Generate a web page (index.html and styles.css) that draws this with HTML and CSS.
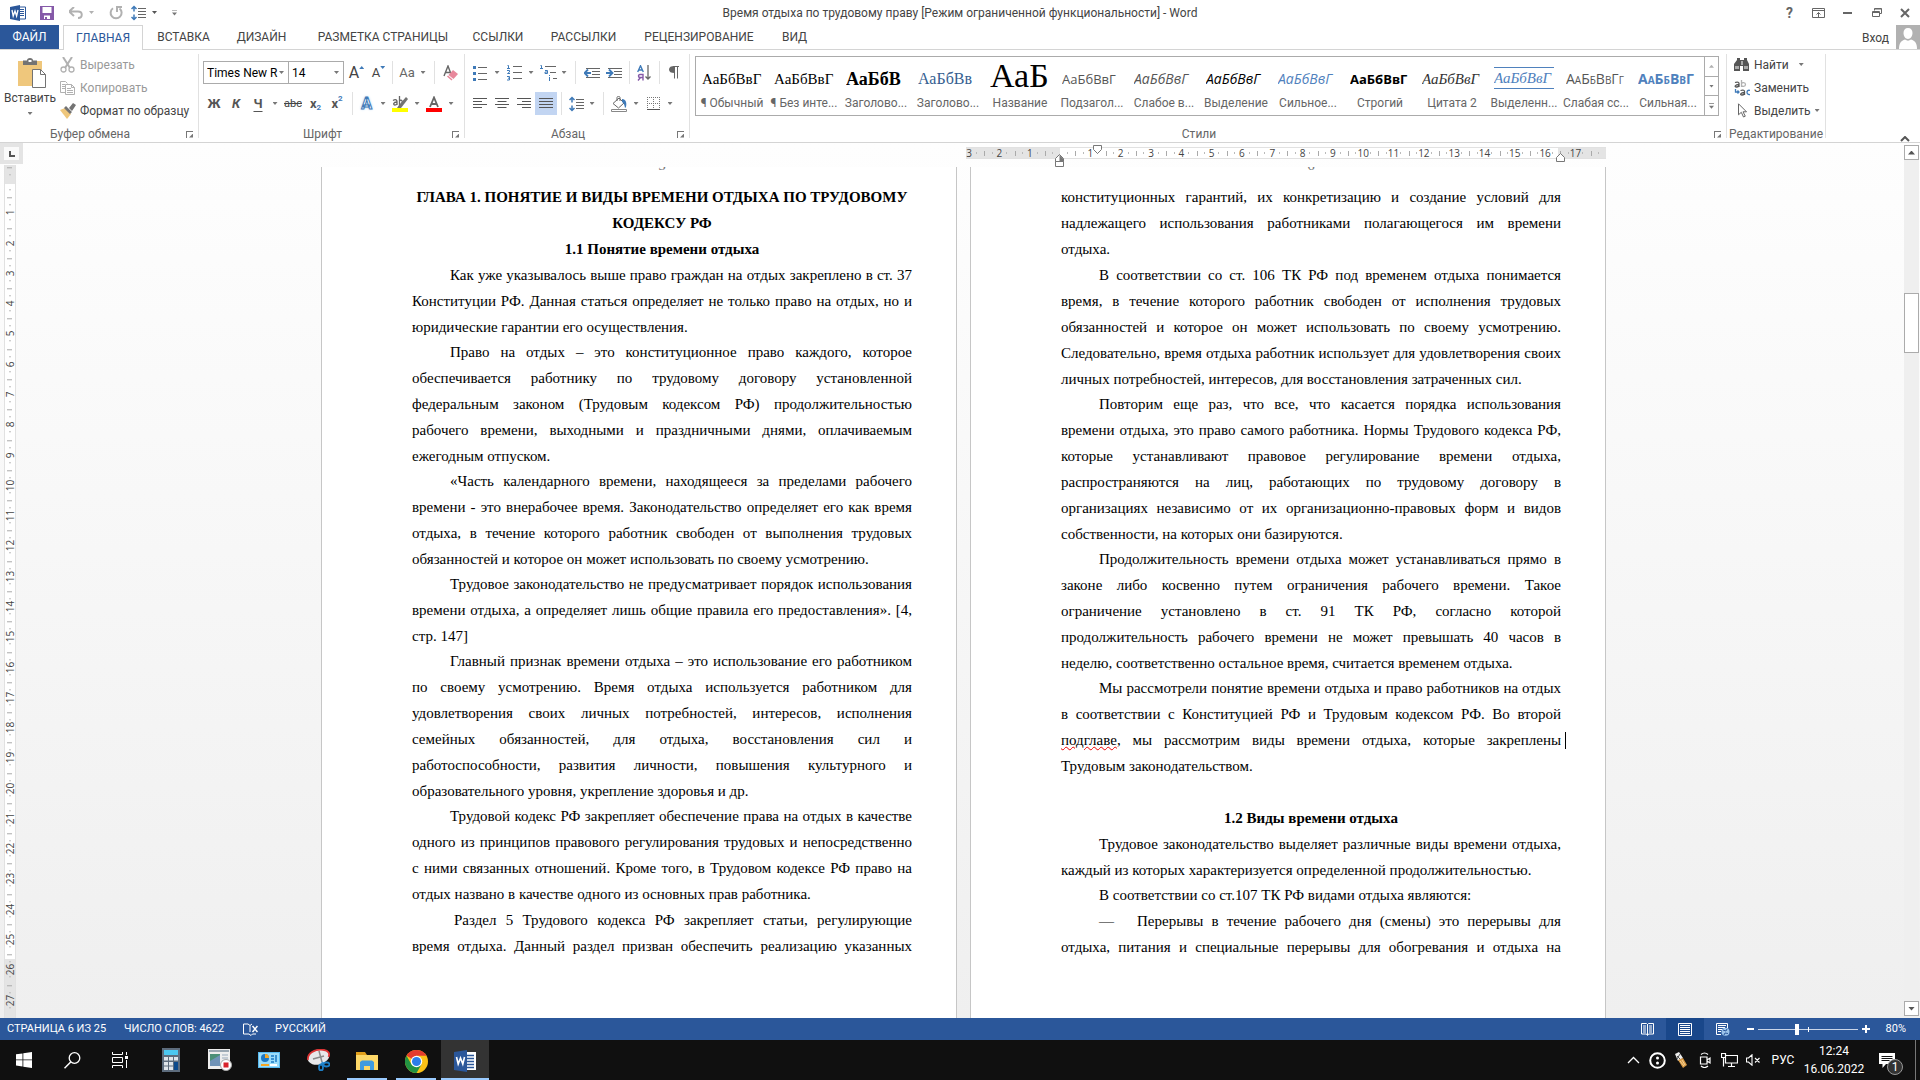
FILE: index.html
```html
<!DOCTYPE html>
<html lang="ru">
<head>
<meta charset="utf-8">
<title>Время отдыха по трудовому праву - Word</title>
<link rel="stylesheet" href="styles.css">
</head>
<body>
<header class="titlebar">
  <div class="quick">
    <svg class="q-word" width="16" height="16" viewBox="0 0 16 16"><path d="M9 2h6.500v12H9z" fill="#fff" stroke="#2b579a"/><path d="M10 4.500h4M10 6.500h4M10 8.500h4M10 10.500h4" stroke="#2b579a"/><path d="M0 2l10-2v16L0 14z" fill="#2b579a"/><path d="M2 5l1.200 6L5 6l1.600 5L8 5" fill="none" stroke="#fff" stroke-width="1.300"/></svg>
    <button aria-label="Сохранить"><svg width="14" height="14" viewBox="0 0 14 14"><path d="M0 0h14v14H0z" fill="#8559a8"/><path d="M2.500 1h9v6h-9zM4 9.500h6V13H7V11H5v2H4z" fill="#fff"/></svg></button>
    <button aria-label="Отменить"><svg width="14" height="12" viewBox="0 0 14 12"><path d="M5 0L0 4.500 5 9M1 4.500h8c5 0 5 6.500 0 6.500" fill="none" stroke="#b1b1b1" stroke-width="2"/></svg><i class="caret pale"></i></button>
    <button aria-label="Повторить"><svg width="14" height="14" viewBox="0 0 14 14"><path d="M4 2.300A5.500 5.500 0 1 0 10.500 2.500M8 6V1h5" fill="none" stroke="#b1b1b1" stroke-width="2"/></svg></button>
    <button class="spacing" aria-label="Интервал"><svg width="15" height="16" viewBox="0 0 15 16"><path d="M3 1.500v5M3 9.500v5M.5 4L3 1.500 5.500 4M.5 12L3 14.500 5.500 12" fill="none" stroke="#3f7ab8" stroke-width="1.500"/><path d="M7 3.500h8M7 6.500h8M7 9.500h8M7 12.500h8" stroke="#666"/></svg><i class="caret dark"></i></button>
    <button aria-label="Настройка панели"><i class="caret lined"></i></button>
  </div>
  <h1>Время отдыха по трудовому праву [Режим ограниченной функциональности] - Word</h1>
  <div class="winbtns">
    <button aria-label="Справка" class="help">?</button>
    <button aria-label="Параметры ленты"><svg width="13" height="10" viewBox="0 0 13 10"><path d="M.5.5h12v9H.5zM.5 2.500h12M6.500 9V4.500M4.500 6.500l2-2 2 2" fill="none" stroke="#666"/></svg></button>
    <button aria-label="Свернуть"><svg width="9" height="2"><path d="M0 1h9" stroke="#666" stroke-width="2"/></svg></button>
    <button aria-label="Восстановить"><svg width="10" height="9" viewBox="0 0 10 9"><path d="M2.500 2.500v-2h7v5h-2M.5 3.500h7v5h-7zM.5 4.500h7M2.500 1h7" fill="none" stroke="#666"/></svg></button>
    <button aria-label="Закрыть"><svg width="10" height="10" viewBox="0 0 10 10"><path d="M1 1l8 8M9 1L1 9" stroke="#666" stroke-width="2"/></svg></button>
  </div>
</header>

<nav class="tabs">
  <button class="file">ФАЙЛ</button>
  <button class="active">ГЛАВНАЯ</button>
  <button>ВСТАВКА</button>
  <button>ДИЗАЙН</button>
  <button>РАЗМЕТКА СТРАНИЦЫ</button>
  <button>ССЫЛКИ</button>
  <button>РАССЫЛКИ</button>
  <button>РЕЦЕНЗИРОВАНИЕ</button>
  <button>ВИД</button>
  <a class="login" href="#">Вход</a>
  <svg class="avatar" width="24" height="24" viewBox="0 0 24 24"><path d="M0 0h24v24H0z" fill="#b1b1b1"/><path d="M12 3c3 0 4.500 2 4.500 5S14.500 14 12 14 7.500 11 7.500 8 9 3 12 3zM3 24c0-6 2-8 6-9.500 2 1.500 4 1.500 6 0C19 16 21 18 21 24z" fill="#fff"/></svg>
</nav>

<div class="ribbon">
  <section class="group clipboard">
    <div class="body">
      <button class="paste"><svg width="28" height="30" viewBox="0 0 28 30"><path d="M0 3h24v25H0z" fill="#efc77c"/><path d="M5 2.500h4C9 1 10 0 12 0s3 1 3 2.500h4V7H5z" fill="#737373"/><path d="M10.500 2h3v2h-3z" fill="#fff"/><path d="M14.500 11.500h8l5 5v13h-13z" fill="#fff" stroke="#737373"/><path d="M22.500 11.500v5h5" fill="none" stroke="#737373"/></svg><span>Вставить</span><i class="caret"></i></button>
      <div class="stack">
        <button class="off"><svg width="16" height="16" viewBox="0 0 16 16"><path d="M3 0l7 11M12 0L5 11" stroke="#b1b1b1" stroke-width="2"/><circle cx="3.500" cy="12.500" r="2.500" fill="none" stroke="#b1b1b1" stroke-width="1.300"/><circle cx="11.500" cy="12.500" r="2.500" fill="none" stroke="#b1b1b1" stroke-width="1.300"/></svg>Вырезать</button>
        <button class="off"><svg width="16" height="16" viewBox="0 0 16 16"><path d="M5 12.500H.5V1.500h5l2 2M2 4.500h3M2 6.500h3M2 8.500h3" fill="none" stroke="#b1b1b1"/><path d="M5.500 4.500h6l3 3v7h-9zM11.500 4.500v3h3M7 8.500h4M7 10.500h6M7 12.500h6" fill="none" stroke="#b1b1b1"/></svg>Копировать</button>
        <button><svg width="16" height="16" viewBox="0 0 16 16"><path d="M0 7l5-2 6 6-4 5z" fill="#efc77c"/><path d="M6 3l6 6-2 2-6-6zM9 5l4-5 3 2-4 6z" fill="#737373"/></svg>Формат по образцу</button>
      </div>
    </div>
    <footer><span>Буфер обмена</span><button class="launch" aria-label="Буфер обмена"></button></footer>
  </section>

  <section class="group font">
    <div class="body">
      <div class="row">
        <label class="combo wide"><select aria-label="Шрифт"><option>Times New R</option></select></label>
        <label class="combo narrow"><select aria-label="Размер"><option>14</option></select></label>
        <button class="w25 big" aria-label="Увеличить">A<i class="up"></i></button>
        <button class="w19 small" aria-label="Уменьшить">A<i class="down"></i></button>
        <i class="sep w8"></i>
        <button class="w22 case" aria-label="Регистр">Aa</button><button class="w10" aria-label="Регистр, меню"><i class="caret"></i></button>
        <i class="sep w12"></i>
        <button class="w22" aria-label="Очистить"><svg width="16" height="16" viewBox="0 0 16 16"><path d="M1 11L5 1l3 8M2 7.500h5" fill="none" stroke="#666" stroke-width="1.400"/><path d="M10 5l5 4-4.500 5-5-4z" fill="#e8879b"/><path d="M5 10.500l4.500 4-1 1-4.500-4z" fill="#e8879b"/></svg></button>
      </div>
      <div class="row">
        <button class="w22 b">Ж</button><button class="w22 b i">К</button><button class="w22 b u">Ч</button><button class="w12" aria-label="Подчеркивание"><i class="caret"></i></button>
        <button class="w24 strike">abc</button><button class="w21 b sub">x<sub>2</sub></button><button class="w22 b sub">x<sup>2</sup></button>
        <i class="sep w8"></i>
        <button class="w21 fx" aria-label="Эффекты">A</button><button class="w12" aria-label="Эффекты, меню"><i class="caret"></i></button>
        <button class="w22" aria-label="Выделение цветом"><svg width="16" height="16" viewBox="0 0 16 16"><path d="M0 12h16v4H0z" fill="#ff0"/><path d="M1 4.500c3-2 4 0 4 1V9M5 6C1 6 1 9 3 9s2-1 2-1.500M7.500 0v9M7.500 5c2-2 3.500 0 2.500 3" fill="none" stroke="#666" stroke-width="1.300"/><path d="M14 1l2 2-7 9H5l2-3z" fill="#737373"/></svg></button><button class="w12" aria-label="Цвет выделения"><i class="caret"></i></button>
        <button class="w22" aria-label="Цвет текста"><svg width="16" height="16" viewBox="0 0 16 16"><path d="M0 12h16v4H0z" fill="red"/><path d="M4 11L8 1.500 12 11M5.500 8h5" fill="none" stroke="#666" stroke-width="1.800"/></svg></button><button class="w12" aria-label="Цвет"><i class="caret"></i></button>
      </div>
    </div>
    <footer><span>Шрифт</span><button class="launch" aria-label="Шрифт"></button></footer>
  </section>

  <section class="group para">
    <div class="body">
      <div class="row">
        <button class="w22" aria-label="Маркеры"><svg width="14" height="16" viewBox="0 0 14 16"><path d="M5 2.500h9M5 8.500h9M5 14.500h9" stroke="#666"/><path d="M0 1h3v3H0zM0 7h3v3H0zM0 13h3v3H0z" fill="#3f7ab8"/></svg></button><button class="w12" aria-label="Маркеры, меню"><i class="caret"></i></button>
        <button class="w22" aria-label="Нумерация"><svg width="15" height="17" viewBox="0 0 15 17"><path d="M6 2.500h9M6 8.500h9M6 14.500h9" stroke="#666"/><path d="M.5 1.500h1v3M0 4.500h3M0 6.500h2.500V8L.5 9.500H3M0 12.500h2.500v3.500H0M1 14.200h1.500" fill="none" stroke="#3f7ab8"/></svg></button><button class="w12" aria-label="Нумерация, меню"><i class="caret"></i></button>
        <button class="w22" aria-label="Многоуровневый список"><svg width="17" height="17" viewBox="0 0 17 17"><path d="M5 2.500h11M10 8.500h6M13 14.500h4" stroke="#666"/><path d="M.5 1.500h1v3M0 4.500h3M5 6.500h2.500v3H5V8h2M9.500 11v1M9.500 13v4" fill="none" stroke="#3f7ab8"/></svg></button><button class="w10" aria-label="Список, меню"><i class="caret"></i></button>
        <i class="sep w12"></i>
        <button class="w22" aria-label="Уменьшить отступ"><svg width="16" height="12" viewBox="0 0 16 12"><path d="M2 1.500h14M8 4.500h8M8 7.500h8M2 10.500h14" stroke="#666"/><path d="M7 6H1M4 2.500L.5 6 4 9.500" fill="none" stroke="#3f7ab8" stroke-width="1.800"/></svg></button>
        <button class="w22" aria-label="Увеличить отступ"><svg width="16" height="12" viewBox="0 0 16 12"><path d="M2 1.500h14M8 4.500h8M8 7.500h8M2 10.500h14" stroke="#666"/><path d="M0 6h6M3 2.500L6.500 6 3 9.500" fill="none" stroke="#3f7ab8" stroke-width="1.800"/></svg></button>
        <i class="sep w8"></i>
        <button class="w22" aria-label="Сортировка"><svg width="14" height="16" viewBox="0 0 14 16"><path d="M.7 7L3.500.8 6.300 7M1.500 5h4" fill="none" stroke="#3f7ab8" stroke-width="1.400"/><path d="M6 15.500V9.500H3c-2 0-2 3 0 3h3M3.500 12.500L1 15.500" fill="none" stroke="#8559a8" stroke-width="1.400"/><path d="M11 0v14M8.500 11.500L11 14l2.500-2.500" fill="none" stroke="#666" stroke-width="1.300"/></svg></button>
        <i class="sep w8"></i>
        <button class="w22" aria-label="Знаки абзаца"><svg width="10" height="13" viewBox="0 0 10 13"><path d="M10 .5H4M5.500.5v12M8.500.5v12" fill="none" stroke="#666"/><path d="M5.500 0v7C2 7 0 6 0 3.500S2 0 5.500 0z" fill="#666"/></svg></button>
      </div>
      <div class="row">
        <button class="w22" aria-label="По левому краю"><svg width="14" height="11" viewBox="0 0 14 11"><path d="M0 .5h14M0 3.500h9M0 6.500h14M0 9.500h9" stroke="#555"/></svg></button>
        <button class="w22" aria-label="По центру"><svg width="14" height="11" viewBox="0 0 14 11"><path d="M0 .5h14M2.500 3.500h9M0 6.500h14M2.500 9.500h9" stroke="#555"/></svg></button>
        <button class="w22" aria-label="По правому краю"><svg width="14" height="11" viewBox="0 0 14 11"><path d="M0 .5h14M5 3.500h9M0 6.500h14M5 9.500h9" stroke="#555"/></svg></button>
        <button class="w22 on" aria-label="По ширине"><svg width="14" height="11" viewBox="0 0 14 11"><path d="M0 .5h14M0 3.500h14M0 6.500h14M0 9.500h14" stroke="#555"/></svg></button>
        <i class="sep w8"></i>
        <button class="w22" aria-label="Интервал строк"><svg width="15" height="16" viewBox="0 0 15 16"><path d="M3 1.500v5M3 9.500v5M.5 4L3 1.500 5.500 4M.5 12L3 14.500 5.500 12" fill="none" stroke="#3f7ab8" stroke-width="1.500"/><path d="M7 3.500h8M7 6.500h8M7 9.500h8M7 12.500h8" stroke="#666"/></svg></button><button class="w10" aria-label="Интервал, меню"><i class="caret"></i></button>
        <i class="sep w12"></i>
        <button class="w21" aria-label="Заливка"><svg width="17" height="16" viewBox="0 0 17 16"><path d="M.5 13.500h15v2H.5z" fill="#fff" stroke="#888"/><path d="M2 7.500L8 2l5 5-5.500 5zM6 5V1.500C6 0 9 0 9 1.500V5" fill="#fff" stroke="#666"/><path d="M11 3c4 0 5 4 4 8l-1 1c-.5-3-1-5-3-6z" fill="#3f7ab8"/></svg></button><button class="w12" aria-label="Заливка, меню"><i class="caret"></i></button>
        <button class="w22" aria-label="Границы"><svg width="13" height="13" viewBox="0 0 13 13"><path d="M.5 0v12M12.500 0v12M6.500 0v12M0 .5h13M0 6.500h13" stroke="#777" stroke-dasharray="1 1"/><path d="M0 12.500h13" stroke="#555"/></svg></button><button class="w12" aria-label="Границы, меню"><i class="caret"></i></button>
      </div>
    </div>
    <footer><span>Абзац</span><button class="launch" aria-label="Абзац"></button></footer>
  </section>

  <section class="group styles">
    <div class="gallery">
      <button><b class="p-serif">АаБбВвГ</b><span>¶ Обычный</span></button>
      <button><b class="p-serif">АаБбВвГ</b><span>¶ Без инте...</span></button>
      <button><b class="p-h1">АаБбВ</b><span>Заголово...</span></button>
      <button><b class="p-h2">АаБбВв</b><span>Заголово...</span></button>
      <button><b class="p-title">АаБ</b><span>Название</span></button>
      <button><b class="p-subt">АаБбВвГ</b><span>Подзагол...</span></button>
      <button><b class="p-weak">АаБбВвГ</b><span>Слабое в...</span></button>
      <button><b class="p-emph">АаБбВвГ</b><span>Выделение</span></button>
      <button><b class="p-blue">АаБбВвГ</b><span>Сильное...</span></button>
      <button><b class="p-strong">АаБбВвГ</b><span>Строгий</span></button>
      <button><b class="p-quote">АаБбВвГ</b><span>Цитата 2</span></button>
      <button><b class="p-iquote">АаБбВвГ</b><span>Выделенн...</span></button>
      <button><b class="p-ref">АаБбВвГг</b><span>Слабая сс...</span></button>
      <button><b class="p-iref">АаБбВвГ</b><span>Сильная...</span></button>
      <div class="gscroll">
        <button aria-label="Вверх"><i class="caret flip pale"></i></button>
        <button aria-label="Вниз"><i class="caret"></i></button>
        <button aria-label="Дополнительно"><i class="caret lined"></i></button>
      </div>
    </div>
    <footer><span>Стили</span><button class="launch" aria-label="Стили"></button></footer>
  </section>

  <section class="group editing">
    <div class="stack">
      <button><svg width="16" height="14" viewBox="0 0 16 14"><path d="M3 0h3v2h4V0h3v2l2 4v7H9V8H6v5H0V6l3-4z" fill="#555"/><path d="M2 8v3M4 8v3M11 8v3M13 8v3M8 3v4" stroke="#fff"/></svg>Найти<i class="caret far"></i></button>
      <button><svg width="16" height="16" viewBox="0 0 16 16"><path d="M1 2.500c3-1 4 0 4 1V7M5 4.500C1 4.500 0 7 2.500 7 4 7 5 6 5 5" fill="none" stroke="#555" stroke-width="1.300"/><path d="M7.500 0v7M7.500 4c0-2 4-2 4 .5S7.500 7 7.500 5" fill="none" stroke="#b1b1b1" stroke-width="1.300"/><path d="M1.500 9v3H5M3.500 10.500L5 12l-1.500 1.500M16 10.500c-4-1.500-4 5 0 4" fill="none" stroke="#3f7ab8" stroke-width="1.300"/><path d="M6.500 10.500c3-1 4 0 4 1V15M10.500 12.500c-4 0-5 2.500-2.500 2.500 1.500 0 2.500-1 2.500-2" fill="none" stroke="#555" stroke-width="1.300"/></svg>Заменить</button>
      <button><svg width="16" height="15" viewBox="0 0 16 15"><path d="M4.500.8v11l2.800-2.500L9.500 14l1.800-.8L9 8.800h3.500z" fill="#fff" stroke="#666"/></svg>Выделить<i class="caret near"></i></button>
    </div>
    <footer><span>Редактирование</span></footer>
  </section>
  <div class="tail"><button aria-label="Свернуть ленту"><svg width="10" height="6" viewBox="0 0 10 6"><path d="M1 5l4-4 4 4" fill="none" stroke="#555" stroke-width="2"/></svg></button></div>
</div>

<main class="workspace">
  <div class="side">
    <button class="corner" aria-label="Табуляция"><svg width="6" height="6"><path d="M1 0v5h5" fill="none" stroke="#555" stroke-width="2"/></svg></button>
    <div class="vruler"><i></i><i>1</i><i>2</i><i>3</i><i>4</i><i>5</i><i>6</i><i>7</i><i>8</i><i>9</i><i>10</i><i>11</i><i>12</i><i>13</i><i>14</i><i>15</i><i>16</i><i>17</i><i>18</i><i>19</i><i>20</i><i>21</i><i>22</i><i>23</i><i>24</i><i>25</i><i>26</i><i>27</i></div>
  </div>
  <div class="canvas">
    <div class="hrow">
      <div class="hruler">
        <div class="clip"><div class="cells"><i>3</i><i>2</i><i>1</i><i></i><i>1</i><i>2</i><i>3</i><i>4</i><i>5</i><i>6</i><i>7</i><i>8</i><i>9</i><i>10</i><i>11</i><i>12</i><i>13</i><i>14</i><i>15</i><i>16</i><i>17</i><i></i></div></div>
        <svg class="mark m-left" width="11" height="15" viewBox="0 0 11 15"><path d="M1.500 8.500v-3l4-4 4 4v3zM1.500 8.500h8v5h-8z" fill="#fff" stroke="#777"/><path d="M5.500 2v6h4V6z" fill="#777"/></svg>
        <svg class="mark m-first" width="9" height="9" viewBox="0 0 9 9"><path d="M.5.500h8v4l-4 4-4-4z" fill="#fff" stroke="#777"/></svg>
        <svg class="mark m-right" width="9" height="9" viewBox="0 0 9 9"><path d="M.5 8.500h8v-4l-4-4-4 4z" fill="#fff" stroke="#777"/></svg>
      </div>
    </div>
    <div class="pages">
      <article class="page">
        <div class="pnum">5</div>
        <h2>ГЛАВА 1. ПОНЯТИЕ И ВИДЫ ВРЕМЕНИ ОТДЫХА ПО ТРУДОВОМУ КОДЕКСУ РФ</h2>
        <h2>1.1 Понятие времени отдыха</h2>
        <p>Как уже указывалось выше право граждан на отдых закреплено в ст. 37 Конституции РФ. Данная статься определяет не только право на отдых, но и юридические гарантии его осуществления.</p>
        <p>Право на отдых – это конституционное право каждого, которое обеспечивается работнику по трудовому договору установленной федеральным законом (Трудовым кодексом РФ) продолжительностью рабочего времени, выходными и праздничными днями, оплачиваемым ежегодным отпуском.</p>
        <p>«Часть календарного времени, находящееся за пределами рабочего времени - это внерабочее время. Законодательство определяет его как время отдыха, в течение которого работник свободен от выполнения трудовых обязанностей и которое он может использовать по своему усмотрению.</p>
        <p>Трудовое законодательство не предусматривает порядок использования времени отдыха, а определяет лишь общие правила его предоставления». [4, стр. 147]</p>
        <p>Главный признак времени отдыха – это использование его работником по своему усмотрению. Время отдыха используется работником для удовлетворения своих личных потребностей, интересов, исполнения семейных обязанностей, для отдыха, восстановления сил и работоспособности, развития личности, повышения культурного и образовательного уровня, укрепление здоровья и др.</p>
        <p>Трудовой кодекс РФ закрепляет обеспечение права на отдых в качестве одного из принципов правового регулирования трудовых и непосредственно с ними связанных отношений. Кроме того, в Трудовом кодексе РФ право на отдых названо в качестве одного из основных прав работника.</p>
        <p class="runs-on deeper">Раздел 5 Трудового кодекса РФ закрепляет статьи, регулирующие время отдыха. Данный раздел призван обеспечить реализацию указанных</p>
      </article>
      <article class="page">
        <div class="pnum">6</div>
        <p class="carried">конституционных гарантий, их конкретизацию и создание условий для надлежащего использования работниками полагающегося им времени отдыха.</p>
        <p>В соответствии со ст. 106 ТК РФ под временем отдыха понимается время, в течение которого работник свободен от исполнения трудовых обязанностей и которое он может использовать по своему усмотрению. Следовательно, время отдыха работник использует для удовлетворения своих личных потребностей, интересов, для восстановления затраченных сил.</p>
        <p>Повторим еще раз, что все, что касается порядка использования времени отдыха, это право самого работника. Нормы Трудового кодекса РФ, которые устанавливают правовое регулирование времени отдыха, распространяются на лиц, работающих по трудовому договору в организациях независимо от их организационно-правовых форм и видов собственности, на которых они базируются.</p>
        <p>Продолжительность времени отдыха может устанавливаться прямо в законе либо косвенно путем ограничения рабочего времени. Такое ограничение установлено в ст. 91 ТК РФ, согласно которой продолжительность рабочего времени не может превышать 40 часов в неделю, соответственно остальное время, считается временем отдыха.</p>
        <p>Мы рассмотрели понятие времени отдыха и право работников на отдых в соответствии с Конституцией РФ и Трудовым кодексом РФ. Во второй <span class="typo">подглаве</span>, мы рассмотрим виды времени отдыха, которые закреплены<span class="cursor"></span> Трудовым законодательством.</p>
        <p class="blank">&nbsp;</p>
        <h2>1.2 Виды времени отдыха</h2>
        <p>Трудовое законодательство выделяет различные виды времени отдыха, каждый из которых характеризуется определенной продолжительностью.</p>
        <p>В соответствии со ст.107 ТК РФ видами отдыха являются:</p>
        <p class="runs-on"><span class="dash">—</span>Перерывы в течение рабочего дня (смены) это перерывы для отдыха, питания и специальные перерывы для обогревания и отдыха на</p>
      </article>
    </div>
  </div>
  <div class="vscroll">
    <button aria-label="Вверх"><i class="caret flip dark"></i></button>
    <div class="track"><div class="thumb"></div></div>
    <button aria-label="Вниз"><i class="caret dark"></i></button>
  </div>
</main>

<footer class="status">
  <span class="s1">СТРАНИЦА 6 ИЗ 25</span>
  <span class="s2">ЧИСЛО СЛОВ: 4622</span>
  <svg class="s3" width="15" height="13" viewBox="0 0 15 13"><path d="M8 12.500L6 11H.5V1H5l2 1.500 2-1.500M7 2.500V9M13 11H9.500L8 12.500" fill="none" stroke="#fff"/><path d="M9.500 3l5 6M14.500 3l-5 6" stroke="#fff" stroke-width="1.500"/></svg>
  <span>РУССКИЙ</span>
  <div class="views">
    <button aria-label="Режим чтения"><svg width="13" height="13" viewBox="0 0 13 13"><path d="M.5.500h5l1 1 1-1h5v10.500h-5l-1 1.500-1-1.500h-5zM6.500 1v11" fill="none" stroke="#fff"/><path d="M2 3h3M2 5h3M2 7h3M2 9h3M8 3h3M8 5h3M8 7h3M8 9h3" stroke="#fff"/></svg></button>
    <button class="cur" aria-label="Разметка страницы"><svg width="14" height="13" viewBox="0 0 14 13"><path d="M.5.500h13v12H.5z" fill="none" stroke="#fff"/><path d="M2 2.500h10M2 4.500h10M2 6.500h10M2 8.500h10M2 10.500h10" stroke="#fff"/></svg></button>
    <button aria-label="Веб-документ"><svg width="14" height="13" viewBox="0 0 14 13"><path d="M5 11.500H.5V.500h11V5M2 2.500h8M2 4.500h7M2 6.500h4M2 8.500h3" fill="none" stroke="#fff"/><circle cx="9.500" cy="8.800" r="4" fill="#9cc3ea"/><path d="M7 7l3 1 1-2M8 12l1-2 3 .5" stroke="#2b579a" fill="none"/></svg></button>
  </div>
  <button class="zb" aria-label="Уменьшить"><svg width="7" height="8"><path d="M0 4h7" stroke="#fff" stroke-width="2"/></svg></button>
  <input type="range" min="0" max="100" value="39" aria-label="Масштаб">
  <button class="zb" aria-label="Увеличить"><svg width="8" height="8"><path d="M0 4h8M4 0v8" stroke="#fff" stroke-width="2"/></svg></button>
  <span class="pct">80%</span>
</footer>

<div class="taskbar">
  <div class="sys">
    <button aria-label="Пуск"><svg width="16" height="16" viewBox="0 0 16 16"><path d="M0 2.300L6.500 1.400v6.100H0zM7.300 1.300L16 0v7.500H7.300zM0 8.300h6.500v6.200L0 13.600zM7.300 8.300H16V16l-8.700-1.300z" fill="#fff"/></svg></button>
    <button aria-label="Поиск"><svg width="17" height="17" viewBox="0 0 17 17"><circle cx="10.500" cy="6" r="5.300" fill="none" stroke="#fff" stroke-width="1.300"/><path d="M6.700 10L.5 16.300" stroke="#fff" stroke-width="1.500"/></svg></button>
    <button aria-label="Представление задач"><svg width="16" height="16" viewBox="0 0 16 16"><path d="M.5 0v2.500h10V0M.5 16v-2.500h10V16M.5 5.500h10v5H.5zM14.500 0v3M14.500 8v8" fill="none" stroke="#fff"/><path d="M13 4h3v3h-3z" fill="#fff"/></svg></button>
  </div>
  <div class="apps">
    <button aria-label="Калькулятор"><svg width="18" height="24" viewBox="0 0 18 24"><path d="M0 0h18v24H0z" fill="#5d6c7c"/><path d="M2 2h14v5H2z" fill="#4cc8f0"/><path d="M2 9h4v3.500H2zM7 9h4v3.500H7zM12 9h4v3.500h-4zM2 14h4v3.500H2zM7 14h4v3.500H7zM2 18.500h4V22H2zM7 18.500h4V22H7z" fill="#dfe5ea"/><path d="M12 14h4v8h-4z" fill="#0c4a8c"/></svg></button>
    <button aria-label="Запись экрана"><svg width="24" height="22" viewBox="0 0 24 22"><path d="M0 0h22v20H0z" fill="#eee"/><path d="M1 1h20v2H1z" fill="#9aa7b2"/><path d="M2 5h10v12H2z" fill="#4b8f78"/><path d="M2 12l10-6v11H2z" fill="#6f93b8"/><path d="M14 6h6M14 9h6M14 12h6" stroke="#9ab"/><circle cx="18" cy="16" r="5.500" fill="#fff" stroke="#aaa"/><path d="M15.500 13.500h5v5h-5z" fill="#d8232a"/></svg></button>
    <button aria-label="Панель управления"><svg width="22" height="16" viewBox="0 0 22 16"><path d="M0 0h22v16H0z" fill="#57b9ef"/><path d="M1 1h20v14H1z" fill="#9bdcf9"/><circle cx="7" cy="6" r="4" fill="#1b78c4"/><path d="M7 6V2a4 4 0 0 1 4 4z" fill="#f5a623"/><path d="M13 4h3M13 7h3M13 10h3M18 3v7" stroke="#1b78c4" stroke-width="1.500"/><path d="M3 13h8" stroke="#f5a623" stroke-width="2"/><path d="M12 13h7" stroke="#fff" stroke-width="2"/></svg></button>
    <button aria-label="Ножницы"><svg width="23" height="22" viewBox="0 0 23 22"><ellipse cx="11.500" cy="8" rx="11" ry="7.500" transform="rotate(-15 11.500 8)" fill="#e8e8ea"/><path d="M1 11C0 4 8 0 16 .8c6 .7 7 4 5.500 7" fill="none" stroke="#d33" stroke-width="1.800"/><path d="M6 10l11-3M12 2l3 11" stroke="#8a8a8a" stroke-width="1.500"/><path d="M16 13l-2 3" stroke="#2c8fd6" stroke-width="2"/><ellipse cx="14" cy="18.500" rx="2" ry="3" fill="none" stroke="#1d7fc6" stroke-width="1.800"/><ellipse cx="19.500" cy="15.500" rx="3" ry="2" fill="none" stroke="#1d7fc6" stroke-width="1.800"/></svg></button>
    <button class="run" aria-label="Проводник"><svg width="22" height="18" viewBox="0 0 22 18"><path d="M0 0h9l2 3H0z" fill="#e2a01c"/><path d="M0 3h22v15H0z" fill="#fdd868"/><path d="M4 18v-8l2-1.500h10l2 1.500v8h-4v-4H8v4z" fill="#3f9be0"/></svg></button>
    <button class="run" aria-label="Chrome"><svg width="23" height="23" viewBox="0 0 24 24"><circle cx="12" cy="12" r="12" fill="#fbc116"/><path d="M12 12L1.600 6A12 12 0 0 1 22.400 6z" fill="#e33b2e"/><path d="M1.600 6A12 12 0 0 0 12 24l5.200-9L12 12 6.800 15z" fill="#229342"/><path d="M12 6h10.400L17 15z" fill="#fbc116"/><circle cx="12" cy="12" r="6" fill="#fff"/><circle cx="12" cy="12" r="4.700" fill="#2b7de9"/></svg></button>
    <button class="run front" aria-label="Word"><svg width="22" height="22" viewBox="0 0 22 22"><path d="M12 2h10v18H12z" fill="#fff"/><path d="M13 5.500h7M13 8.500h7M13 11.500h7M13 14.500h7M13 17.500h7" stroke="#2b579a" stroke-width="1.500"/><path d="M0 2l13-2v22L0 20z" fill="#2b579a"/><path d="M2.500 7l1.700 7L6.500 8l2.300 6 1.700-7" fill="none" stroke="#fff" stroke-width="1.600"/></svg></button>
  </div>
  <div class="tray">
    <button aria-label="Скрытые значки"><svg width="13" height="8" viewBox="0 0 13 8"><path d="M1 7l5.500-5.500L12 7" fill="none" stroke="#fff" stroke-width="1.300"/></svg></button>
    <button aria-label="Приложение"><svg width="17" height="17" viewBox="0 0 17 17"><circle cx="8.500" cy="8.500" r="7.300" fill="none" stroke="#fff" stroke-width="2"/><circle cx="8.500" cy="6" r="1.500" fill="#fff"/><circle cx="8.500" cy="11" r="1.500" fill="#fff"/></svg></button>
    <button aria-label="Очистка"><svg width="14" height="16" viewBox="0 0 14 16"><path d="M1 2l4-2 4 6-5 3z" fill="#eee"/><path d="M3 4l3 3M6 2L3 7" stroke="#555"/><path d="M4 8l5-2 4 7-4 3z" fill="#d99a45"/><path d="M6 9l4 5M8 8l3 5" stroke="#f4d49a"/></svg></button>
    <button aria-label="Камера"><svg width="12" height="16" viewBox="0 0 12 16"><path d="M1.500 5h6.500v7H1.500zM8 8l3-2v5L8 9M2 2.500Q5.500-.5 9 2.500M2 14Q5.500 17 9 14" fill="none" stroke="#fff" stroke-width="1.200"/></svg></button>
    <button aria-label="Сеть"><svg width="17" height="14" viewBox="0 0 17 14"><path d="M5 2.500h11.500v7.500H4.500V5M10.500 10v3M7 13.500h7M.5.500h4v4h-4zM2.500 5v8.500" fill="none" stroke="#fff" stroke-width="1.200"/></svg></button>
    <button aria-label="Звук"><svg width="14" height="12" viewBox="0 0 14 12"><path d="M.5 4h2L6 .8v10.400L2.500 8h-2zM9 4l4.500 4.500M13.500 4L9 8.500" fill="none" stroke="#fff" stroke-width="1.100"/></svg></button>
    <button class="lang">РУС</button>
    <button class="clock">12:24<br>16.06.2022</button>
    <button class="note" aria-label="Уведомления"><svg width="16" height="15" viewBox="0 0 16 15"><path d="M0 0h16v11H7l-3.500 4v-4H0z" fill="#fff"/><path d="M2.500 3.500h11M2.500 5.500h11M2.500 7.500h8" stroke="#111"/></svg><span class="badge">1</span></button>
    <i class="edge"></i>
  </div>
</div>
</body>
</html>
```
FILE: styles.css
```css
* { box-sizing: border-box; }
body {
  margin: 0;
  height: 100vh;
  display: flex;
  flex-direction: column;
  overflow: hidden;
  background: #fff;
  color: #444;
  font: 12px/16px Roboto, "Open Sans", sans-serif;
}
button {
  border: 0;
  padding: 0;
  background: none;
  color: inherit;
  font: inherit;
  display: flex;
  align-items: center;
  justify-content: center;
  white-space: nowrap;
}
svg { display: block; flex: none; }
h1, h2, p { margin: 0; font-weight: normal; }

.caret { flex: none; width: 5px; height: 3px; background: #777; clip-path: polygon(0 0, 100% 0, 50% 100%); }
.caret.flip { clip-path: polygon(50% 0, 100% 100%, 0 100%); }
.caret.pale { background: #b1b1b1; }
.caret.dark { background: #555; }
.caret.lined { height: 6px; clip-path: polygon(0 0, 100% 0, 100% 1px, 0 1px, 0 3px, 100% 3px, 50% 100%, 0 3px); }
.vscroll .caret { width: 7px; height: 4px; }

/* Title bar */
.titlebar { height: 25px; display: grid; grid-template-columns: 1fr auto 1fr; align-items: center; flex: none; }
.titlebar h1 { font-size: 12px; line-height: 16px; }
.quick { display: flex; align-items: center; padding-left: 10px; }
.quick button { gap: 6px; }
.q-word { margin-right: 14px; }
.quick button + button { margin-left: 15px; }
.quick .spacing { margin-left: 8px; }
.winbtns { display: flex; justify-content: flex-end; padding-right: 5px; }
.winbtns button { width: 29px; height: 20px; }
.winbtns button:last-child { width: 24px; justify-content: flex-end; padding-right: 5px; }
.winbtns .help { font-size: 14px; font-weight: bold; color: #666; }

/* Tabs */
.tabs {
  height: 25px;
  flex: none;
  display: grid;
  grid-template-columns: 59px 88px 73px 83px 160px 70px 101px 130px 61px 1fr 24px;
  border-bottom: 1px solid #d4d4d4;
}
.tabs button { height: 24px; }
.tabs .file { background: #2b579a; color: #fff; }
.tabs .active { height: 25px; margin: 0 4px; border: 1px solid #d4d4d4; border-bottom: 0; background: #fff; color: #2b579a; }
.login { justify-self: end; align-self: center; padding-right: 7px; color: #444; text-decoration: none; }

/* Ribbon */
.ribbon { height: 93px; flex: none; display: flex; padding-top: 4px; border-bottom: 1px solid #d4d4d4; }
.group { flex: none; display: flex; flex-direction: column; justify-content: space-between; border-right: 1px solid #e1e1e1; margin-bottom: 4px; }
.group > footer { height: 8px; display: flex; align-items: center; color: #666; }
.group > footer span { flex: 1; text-align: center; padding-right: 6px; }
.launch { width: 7px; height: 7px; margin-right: 5px; border: 1px solid #777; border-width: 1px 0 0 1px; }
.launch::after { content: ""; width: 4px; height: 4px; margin: 2px 0 0 2px; background: #777; clip-path: polygon(100% 0, 100% 100%, 0 100%); }
.clipboard { width: 199px; }
.font { width: 266px; }
.para { width: 225px; }
.styles { flex: 1; min-width: 0; }
.editing { width: 99px; }
.editing > footer span { padding: 0; }
.tail { width: 94px; display: flex; align-items: flex-end; justify-content: flex-end; padding: 0 10px 0 0; }
.clipboard .body { display: flex; }
.paste { width: 60px; flex-direction: column; justify-content: flex-start; padding: 4px 0 0 0; line-height: 20px; }
.paste svg { margin-left: 4px; }
.paste .caret { margin-top: 4px; }
.stack { display: flex; flex-direction: column; }
.stack button { height: 23px; gap: 4px; justify-content: flex-start; padding-bottom: 2px; }
.off { color: #999; }
.editing .stack { padding-left: 7px; }
.caret.far { margin-left: 6px; }
.caret.near { margin-left: 0; }
.font .body, .para .body { padding: 7px 0 0 4px; display: flex; flex-direction: column; gap: 8px; }
.row { display: flex; height: 23px; align-items: stretch; }
.w8 { width: 8px; } .w10 { width: 10px; } .w12 { width: 12px; } .w19 { width: 19px; }
.w21 { width: 21px; } .w22 { width: 22px; } .w24 { width: 24px; } .w25 { width: 25px; }
.sep { display: flex; justify-content: center; }
.sep::before { content: ""; width: 1px; background: #e1e1e1; }
.combo { position: relative; height: 23px; }
.combo.wide { width: 86px; margin-right: -1px; }
.combo.narrow { width: 56px; }
.combo select { appearance: none; width: 100%; height: 100%; padding: 0 10px 0 3px; border: 1px solid #ababab; border-radius: 0; background: #fff; color: #000; font: inherit; }
.combo::after { content: ""; position: absolute; right: 5px; top: 10px; width: 5px; height: 3px; background: #777; clip-path: polygon(0 0, 100% 0, 50% 100%); }
.big { font-size: 16px; align-items: center; }
.small { font-size: 13px; }
.big i, .small i { align-self: flex-start; margin-top: 5px; width: 5px; height: 3px; background: #3f7ab8; clip-path: polygon(50% 0, 100% 100%, 0 100%); }
.small i { clip-path: polygon(0 0, 100% 0, 50% 100%); }
.case { font-size: 13px; color: #666; }
.b { font-weight: bold; font-size: 13px; color: #555; }
.i { font-style: italic; }
.u { text-decoration: underline; text-underline-offset: 3px; }
.strike { text-decoration: line-through; font-size: 11px; }
.sub sub, .sub sup { font-size: 8px; line-height: 8px; color: #3f7ab8; }
.sub sub { align-self: flex-end; padding-bottom: 3px; }
.sub sup { align-self: flex-start; padding-top: 3px; }
.fx { font-size: 16px; font-weight: bold; color: #fff; -webkit-text-stroke: 1px #3f7ab8; text-shadow: 0 0 3px #8ab8e8; }
.on { background: #c2d5f2; }

.gallery { margin: 2px 7px 0 5px; height: 60px; border: 1px solid #ababab; display: flex; }
.gallery > button { flex: none; width: 72px; flex-direction: column; justify-content: flex-start; padding: 8px 0 0 0; }
.gallery b { width: 60px; height: 28px; overflow: hidden; text-align: left; font: 14px/28px "Open Sans", sans-serif; color: #000; }
.gallery span { line-height: 20px; color: #666; }
.gallery .p-serif { font-family: "Liberation Serif", serif; font-size: 15px; }
.gallery .p-h1 { font-family: "Liberation Serif", serif; font-weight: bold; font-size: 18px; }
.gallery .p-h2 { font-family: "Liberation Serif", serif; color: #365f91; font-size: 16px; }
.gallery .p-title { font-family: "Liberation Serif", serif; font-size: 34px; line-height: 22px; }
.gallery .p-subt, .gallery .p-weak { color: #555; }
.gallery .p-subt { font-size: 13px; }
.gallery .p-weak, .gallery .p-emph, .gallery .p-blue, .gallery .p-quote, .gallery .p-iquote { font-style: italic; }
.gallery .p-blue { color: #4f81bd; }
.gallery .p-strong { font-weight: bold; font-size: 13px; }
.gallery .p-quote { font-family: "Liberation Serif", serif; font-size: 15px; color: #333; }
.gallery .p-iquote { font-family: "Liberation Serif", serif; font-size: 15px; color: #4f81bd; height: 22px; line-height: 20px; margin: 2px 0 4px; border: 1px solid #4f81bd; border-width: 1px 0; }
.gallery .p-ref { font-variant: small-caps; color: #555; }
.gallery .p-iref { font-variant: small-caps; font-weight: bold; color: #4f81bd; }
.gscroll { width: 15px; margin-left: auto; border-left: 1px solid #ababab; display: flex; flex-direction: column; }
.gscroll button { flex: 1; }
.gscroll button + button { border-top: 1px solid #ababab; }

/* Document */
.workspace { flex: 1; min-height: 0; display: flex; background: linear-gradient(#fefefe, #efefef); }
.side { width: 24px; display: flex; flex-direction: column; }
.corner { width: 23px; height: 21px; margin-bottom: 1px; border: 4px solid #e4e4e4; background: #fafafa; }
.vruler {
  flex: 1;
  width: 12px;
  margin-left: 4px;
  padding: 2px 0 3px;
  display: flex;
  flex-direction: column;
  border: 1px solid #e1e1e1;
  border-width: 0 1px;
  background: linear-gradient(#e4e4e4 19px, #fff 19px, #fff 794px, #e4e4e4 794px);
}
.vruler i, .cells i { flex: 1; display: flex; align-items: center; justify-content: center; font: 10px/12px "Open Sans", sans-serif; color: #444; }
.vruler i {
  writing-mode: vertical-rl;
  transform: rotate(180deg);
  background:
    linear-gradient(#aaa, #aaa) 50% 100% / 5px 1px no-repeat,
    linear-gradient(#bbb, #bbb) 50% 25% / 2px 1px no-repeat,
    linear-gradient(#bbb, #bbb) 50% 75% / 2px 1px no-repeat;
}
.canvas { flex: 1; display: flex; flex-direction: column; padding-right: 1px; min-width: 0; }
.hrow { height: 24px; width: 1285px; align-self: center; display: flex; justify-content: flex-end; flex: none; padding-top: 4px; }
.hruler { position: relative; width: 640px; height: 12px; }
.clip { overflow: hidden; height: 12px; border: 1px solid #e1e1e1; border-width: 1px 0; background: linear-gradient(90deg, #e4e4e4 94px, #fff 94px, #fff 592px, #e4e4e4 592px); }
.cells { display: flex; width: 667px; height: 10px; margin-left: -12px; }
.cells i {
  background:
    linear-gradient(#aaa, #aaa) 0 50% / 1px 5px no-repeat,
    linear-gradient(#bbb, #bbb) 25% 50% / 1px 2px no-repeat,
    linear-gradient(#bbb, #bbb) 75% 50% / 1px 2px no-repeat;
}
.mark { position: absolute; }
.m-left { left: 88px; top: 6px; }
.m-first { left: 127px; top: -2px; }
.m-right { left: 590px; top: 6px; }
.pages { flex: 1; min-height: 0; overflow: hidden; display: flex; justify-content: center; gap: 13px; }
.page {
  width: 636px;
  padding: 0 44px 0 90px;
  background: #fff;
  border: 1px solid #c6c6c6;
  border-width: 0 1px;
  color: #000;
  font: 15px/26px "Liberation Serif", "Times New Roman", serif;
}
.pnum { margin: -10px 0 11px; line-height: 16px; text-align: center; color: #777; }
.page h2 { font-size: 15px; line-height: 26px; font-weight: bold; text-align: center; }
.page p { text-align: justify; text-indent: 38px; }
.page p + p:not(.blank, .runs-on, .carried + p) { margin-top: -1px; }
.page .carried { text-indent: 0; }
.page .runs-on { text-align-last: justify; }
.page .deeper { text-indent: 42px; }
.dash { display: inline-block; width: 38px; text-indent: 0; text-align-last: left; }
.typo { text-decoration: underline wavy #e00 1px; }
.cursor { position: relative; }
.cursor::after { content: ""; position: absolute; left: 4px; top: 0; width: 1px; height: 17px; background: #000; }
.vscroll { width: 16px; padding: 2px 1px 2px 0; display: flex; flex-direction: column; }
.vscroll button { height: 15px; border: 1px solid #ababab; background: #fff; }
.track { flex: 1; background: #efefef; padding-top: 133px; }
.thumb { height: 60px; border: 1px solid #ababab; background: #fff; }

/* Status bar */
.status { height: 22px; flex: none; display: flex; align-items: center; padding-left: 7px; background: #2b579a; color: #fff; font-size: 11px; }
.s1 { width: 117px; }
.s2 { width: 119px; }
.s3 { margin-right: 17px; }
.views { display: flex; margin-left: auto; height: 22px; }
.views button { width: 38px; }
.views .cur { background: #19478a; }
.zb { width: 8px; height: 22px; }
.status .views { margin-right: 4px; }
.status input {
  appearance: none;
  width: 100px;
  height: 12px;
  margin: 0 4px;
  background:
    linear-gradient(#fff, #fff) 50% 50% / 1px 5px no-repeat,
    linear-gradient(#c9d5e8, #c9d5e8) 0 50% / 100% 1px no-repeat;
}
.status input::-webkit-slider-thumb { appearance: none; width: 4px; height: 11px; background: #fff; }
.pct { width: 50px; text-align: right; padding-right: 14px; }

/* Taskbar */
.taskbar { height: 40px; flex: none; display: flex; background: #101010; color: #fff; }
.sys, .apps, .tray { display: flex; }
.sys button, .apps button { width: 48px; height: 40px; }
.apps { gap: 1px; margin-left: 3px; }
.apps .run { padding-top: 2px; background: linear-gradient(#9acbff, #9acbff) 50% 100% / 40px 2px no-repeat; }
.apps .front { background: linear-gradient(#9acbff, #9acbff) 0 100% / 100% 2px no-repeat #333; }
.tray { margin-left: auto; }
.tray button { width: 24px; height: 40px; }
.tray .lang { width: 36px; }
.tray .clock { width: 66px; line-height: 18px; text-align: center; }
.tray .note { width: 48px; position: relative; }
.note svg { margin-right: 8px; }
.badge { position: absolute; left: 20px; top: 19px; width: 16px; height: 16px; border-radius: 8px; border: 1px solid #999; background: #333; line-height: 14px; }
.edge { width: 5px; border-left: 1px solid #777; }
```
